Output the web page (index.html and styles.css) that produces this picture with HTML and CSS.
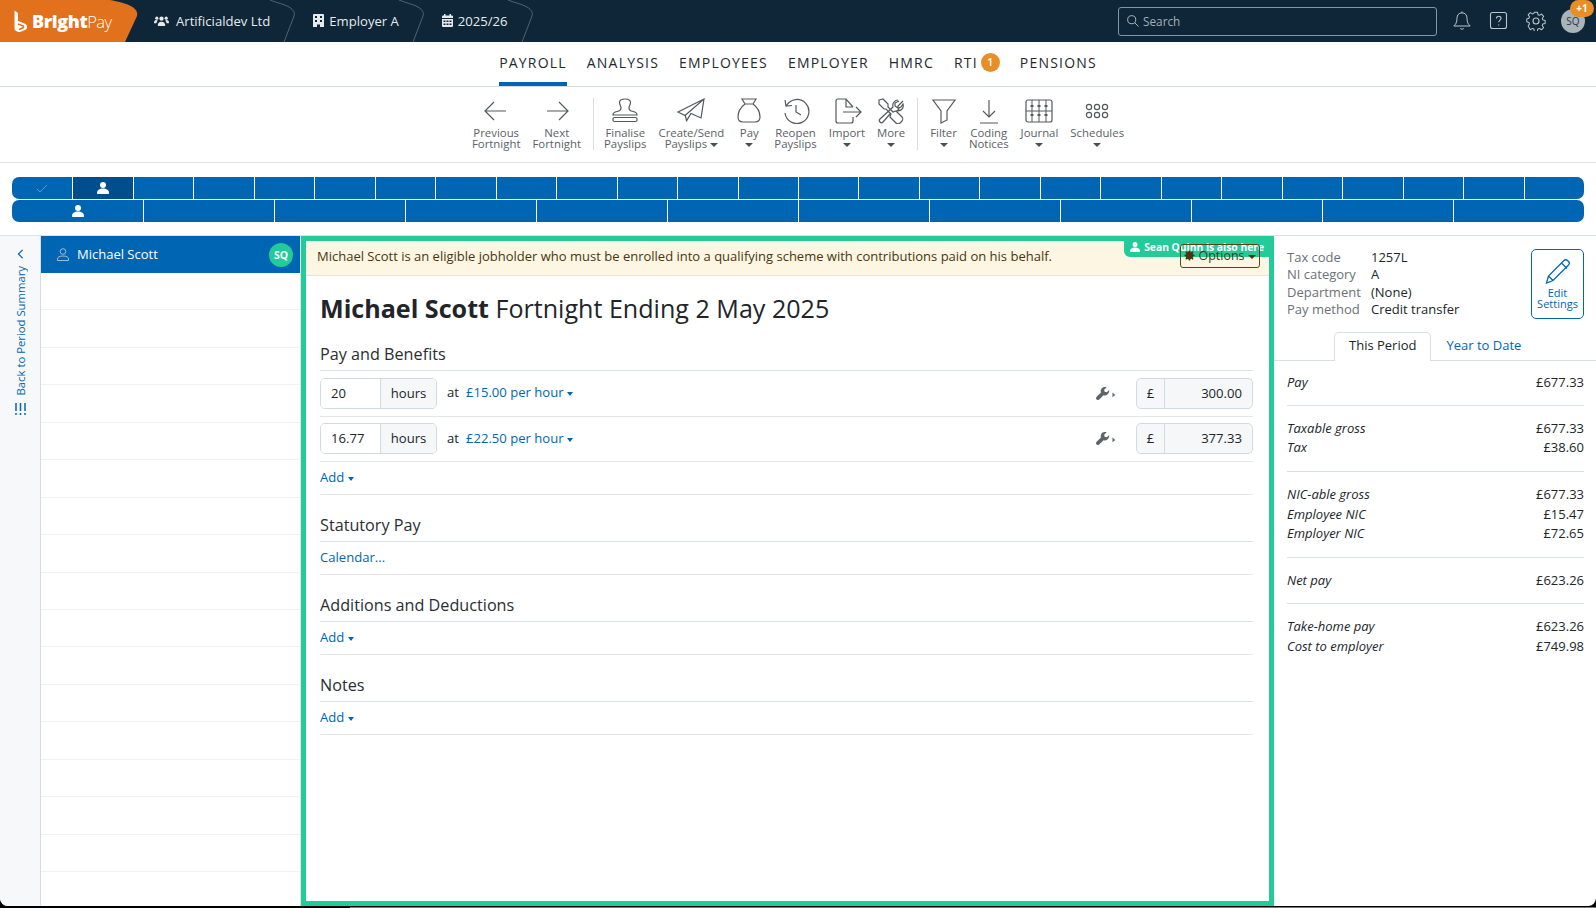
FILE: index.html
```html
<!DOCTYPE html>
<html lang="en">
<head>
    <meta charset="UTF-8">
    <meta name="viewport" content="width=device-width, initial-scale=1.0">
    <title>BrightPay - Payroll</title>
    <link rel="stylesheet" href="styles.css">
</head>
<body>
    <header class="topbar">
        <div class="logo">
            <svg class="logo-mark" viewBox="0 0 14 22"><path d="M.5.5L4 3v8l6.500 2.500c2 .8 2.500 2 2.500 3.500s-.7 2.500-2 3l-5 2c-1 .3-2 0-3-.5l-1.500-1c-.7-.5-1-1-1-2z" fill="#fff"/><path d="M4 14l5.500 2v1.500L5 19.500" fill="none" stroke="#e2711d" stroke-width="1.400"/></svg>
            <span class="logo-bright">Bright</span><span class="logo-pay">Pay</span>
        </div>
        <div class="crumb crumb-first">
            <svg class="crumb-icon crumb-icon-wide" viewBox="0 0 16 12"><circle cx="3" cy="3" r="1.700"/><circle cx="13" cy="3" r="1.700"/><circle cx="8" cy="3.500" r="2.300"/><path d="M0 8c0-2 1-3 2.500-3 .8 0 1.200.3 1.500.6C3 6.400 2.700 7.500 2.700 8.500H.8C.3 8.500 0 8.300 0 8zM16 8c0-2-1-3-2.500-3-.8 0-1.200.3-1.500.6 1 .8 1.300 1.900 1.300 2.900h1.900c.5 0 .8-.2.800-.5zM4 10.500C4 8.500 5.500 6.800 8 6.800s4 1.700 4 3.700c0 .5-.3.800-.8.800H4.800c-.5 0-.8-.3-.8-.8z"/></svg>
            <span>Artificialdev Ltd</span>
            <svg class="crumb-chevron" viewBox="0 0 28 42"><path d="M1 0C8 3 15 4 20 7c5 3 6 6 5 9L15 42"/></svg>
        </div>
        <div class="crumb">
            <svg class="crumb-icon" viewBox="0 0 11 13"><path fill-rule="evenodd" d="M1 0h9a1 1 0 0 1 1 1v12H7v-2.500H4V13H0V1a1 1 0 0 1 1-1zm1 2v2h2V2zm5 0v2h2V2zM2 6v2h2V6zm5 0v2h2V6z"/></svg>
            <span>Employer A</span>
            <svg class="crumb-chevron" viewBox="0 0 28 42"><path d="M1 0C8 3 15 4 20 7c5 3 6 6 5 9L15 42"/></svg>
        </div>
        <div class="crumb">
            <svg class="crumb-icon" viewBox="0 0 11 13"><path fill-rule="evenodd" d="M2 0h1.500v1.500h4V0H9v1.500h1a1 1 0 0 1 1 1V4H0V2.500a1 1 0 0 1 1-1h1zM0 5h11v7a1 1 0 0 1-1 1H1a1 1 0 0 1-1-1zm1.500 1.500V8h2V6.500zm3 0V8h2V6.500zm3 0V8h2V6.500zm-6 3V11h2V9.500zm3 0V11h2V9.500zm3 0V11h2V9.500z"/></svg>
            <span>2025/26</span>
            <svg class="crumb-chevron" viewBox="0 0 28 42"><path d="M1 0C8 3 15 4 20 7c5 3 6 6 5 9L15 42"/></svg>
        </div>
        <div class="topbar-right">
            <div class="search">
                <svg class="search-icon" viewBox="0 0 14 14"><circle cx="5.500" cy="5.500" r="4.700"/><path d="M9 9l4.500 4.500"/></svg>
                <span>Search</span>
            </div>
            <svg class="top-icon" viewBox="0 0 20 22"><path d="M10 2c-3.500 0-5.500 2.500-5.500 6 0 5-1.500 6.500-3.500 8.500h18c-2-2-3.500-3.500-3.500-8.500 0-3.500-2-6-5.500-6zM10 .5V2M8 19c.5 1.300 3.500 1.300 4 0"/></svg>
            <svg class="top-icon" viewBox="0 0 20 20"><rect x="1.500" y="1.500" width="16" height="16" rx="2"/><path d="M7.500 7.500c0-3 4.500-3 4.500-.2 0 2-2.300 2-2.300 4M9.700 13.500v1"/></svg>
            <svg class="top-icon" viewBox="0 0 20 20"><path d="M8.300 1h3.400l.5 2.700 1.500.7 2.400-1.400 2.300 2.500-1.500 2.300.5 1.500 2.600.7v3.200l-2.600.7-.6 1.500 1.500 2.300-2.400 2.400-2.300-1.500-1.500.6-.5 2.700H8.300l-.6-2.700-1.500-.6-2.300 1.500L1.500 16l1.500-2.300-.6-1.500L0 11.500V8.300l2.400-.7.6-1.500L1.500 3.800l2.400-2.400 2.300 1.500 1.500-.6z" transform="scale(.92) translate(.8 .3)" stroke-linejoin="round"/><circle cx="10" cy="10" r="3"/></svg>
            <div class="avatar">SQ<span class="avatar-badge">+1</span></div>
        </div>
    </header>

    <nav class="mainnav">
        <a class="nav-link active">PAYROLL</a>
        <a class="nav-link">ANALYSIS</a>
        <a class="nav-link">EMPLOYEES</a>
        <a class="nav-link">EMPLOYER</a>
        <a class="nav-link">HMRC</a>
        <a class="nav-link">RTI <span class="nav-badge">1</span></a>
        <a class="nav-link">PENSIONS</a>
    </nav>

    <div class="toolbar">
        <div class="tool">
            <svg class="tool-icon" viewBox="0 0 30 26"><path d="M25 13H5M13 4l-9 9 9 9"/></svg>
            <span>Previous<br>Fortnight</span>
        </div>
        <div class="tool">
            <svg class="tool-icon" viewBox="0 0 30 26"><path d="M5 13h20M17 4l9 9-9 9"/></svg>
            <span>Next<br>Fortnight</span>
        </div>
        <div class="tool-sep tool-sep-first"></div>
        <div class="tool">
            <svg class="tool-icon" viewBox="0 0 30 26"><path d="M11 10c0-2-1.500-3-1.500-5.500C9.500 2 12 1 15 1s5.500 1 5.500 3.500C20.500 7 19 8 19 10c0 2 1 3 4 3.500 3 .5 4 1.500 4 3.500H3c0-2 1-3 4-3.500 3-.5 4-1.500 4-3.500zM4.500 19.500h21c1 0 1.500.5 1.500 1.200v1.600c0 .7-.5 1.200-1.500 1.200h-21c-1 0-1.500-.5-1.500-1.200v-1.600c0-.7.5-1.200 1.500-1.200z"/></svg>
            <span>Finalise<br>Payslips</span>
        </div>
        <div class="tool">
            <svg class="tool-icon" viewBox="0 0 30 26"><path d="M28 1L2 14l7 3.500L28 1l-3 19-10-4.500-4.500 7-1.500-6M15 15.500L10.500 23"/></svg>
            <span>Create/Send<br>Payslips <i class="caret"></i></span>
        </div>
        <div class="tool">
            <svg class="tool-icon" viewBox="0 0 30 26"><path d="M8 1h14l-3 5h-8zM11 6h8c4 3 7 8 7 13 0 3-2 5-5 5H9c-3 0-5-2-5-5 0-5 3-10 7-13z"/></svg>
            <span>Pay<br><i class="caret"></i></span>
        </div>
        <div class="tool">
            <svg class="tool-icon" viewBox="0 0 30 26"><path d="M5.500 7.500A12 12 0 1 1 4 15M4 2l1 6 6-.5M15 7v7l5 3"/></svg>
            <span>Reopen<br>Payslips</span>
        </div>
        <div class="tool">
            <svg class="tool-icon" viewBox="0 0 30 26"><path d="M21 9L14 1H6C4.500 1 4 2 4 3v20c0 1 .5 2 2 2h13c1.500 0 2-1 2-2v-4M14 1v8h7M11 14h18M24 9l5 5-5 5"/></svg>
            <span>Import<br><i class="caret"></i></span>
        </div>
        <div class="tool">
            <svg class="tool-icon" viewBox="0 0 30 26"><path d="M3 2l4-1 5 5v3l5 5 3-1 6 6c1 1 1 3 0 4l-2 2c-1 1-3 1-4 0l-6-6 1-3-5-5H8L3 6zM27 3l-5 5v2l1 1-3 3M22 2c-3 0-6 3-5 7L4 21c-1 1-1 2 0 3s2 1 3 0L14 16M23 3l-4 2v3l3 2 3-1 2-3c1 3-1 7-5 7"/></svg>
            <span>More<br><i class="caret"></i></span>
        </div>
        <div class="tool-sep"></div>
        <div class="tool">
            <svg class="tool-icon" viewBox="0 0 30 26"><path d="M4 2h22L18 13v9l-6 3V13z"/></svg>
            <span>Filter<br><i class="caret"></i></span>
        </div>
        <div class="tool">
            <svg class="tool-icon" viewBox="0 0 30 26"><path d="M15 2v17M9 13l6 6 6-6M6 25h18"/></svg>
            <span>Coding<br>Notices</span>
        </div>
        <div class="tool">
            <svg class="tool-icon" viewBox="0 0 30 26"><rect x="2" y="2" width="26" height="22" rx="2"/><path d="M2 13h26M8 2v22M15 2v22M22 2v22" stroke-width="1"/><path d="M8 7v2M15 7v2M22 7v2M8 16v2M15 16v2M22 16v2" stroke-width="3"/></svg>
            <span>Journal<br><i class="caret"></i></span>
        </div>
        <div class="tool">
            <svg class="tool-icon" viewBox="0 0 30 26"><circle cx="7" cy="9" r="2.600"/><circle cx="15" cy="9" r="2.600"/><circle cx="23" cy="9" r="2.600"/><circle cx="7" cy="17" r="2.600"/><circle cx="15" cy="17" r="2.600"/><circle cx="23" cy="17" r="2.600"/></svg>
            <span>Schedules<br><i class="caret"></i></span>
        </div>
    </div>

    <div class="pagers">
        <div class="pager pager-weeks">
            <div class="pager-cell pager-done"><svg class="check" viewBox="0 0 12 9"><path d="M1 5l3 3 7-7"/></svg></div>
            <div class="pager-cell pager-current"><svg class="person" viewBox="0 0 12 12"><circle cx="6" cy="3" r="3"/><path d="M0 11c0-3 2.500-4.500 6-4.500s6 1.500 6 4.500c0 .6-.4 1-1 1H1c-.6 0-1-.4-1-1z"/></svg></div>
            <div class="pager-cell"></div><div class="pager-cell"></div><div class="pager-cell"></div><div class="pager-cell"></div>
            <div class="pager-cell"></div><div class="pager-cell"></div><div class="pager-cell"></div><div class="pager-cell"></div>
            <div class="pager-cell"></div><div class="pager-cell"></div><div class="pager-cell"></div><div class="pager-cell"></div>
            <div class="pager-cell"></div><div class="pager-cell"></div><div class="pager-cell"></div><div class="pager-cell"></div>
            <div class="pager-cell"></div><div class="pager-cell"></div><div class="pager-cell"></div><div class="pager-cell"></div>
            <div class="pager-cell"></div><div class="pager-cell"></div><div class="pager-cell"></div><div class="pager-cell"></div>
        </div>
        <div class="pager pager-months">
            <div class="pager-cell"><svg class="person" viewBox="0 0 12 12"><circle cx="6" cy="3" r="3"/><path d="M0 11c0-3 2.500-4.500 6-4.500s6 1.500 6 4.500c0 .6-.4 1-1 1H1c-.6 0-1-.4-1-1z"/></svg></div>
            <div class="pager-cell"></div><div class="pager-cell"></div><div class="pager-cell"></div><div class="pager-cell"></div>
            <div class="pager-cell"></div><div class="pager-cell"></div><div class="pager-cell"></div><div class="pager-cell"></div>
            <div class="pager-cell"></div><div class="pager-cell"></div><div class="pager-cell"></div>
        </div>
    </div>

    <main class="workspace">
        <aside class="backbar">
            <svg class="back-chevron" viewBox="0 0 8 12"><path d="M6.500 1L1.500 6l5 5"/></svg>
            <span class="back-label">Back to Period Summary</span>
            <svg class="back-list" viewBox="0 0 11 12"><path d="M1 0v8M1 10v2M5.500 0v8M5.500 10v2M10 0v8M10 10v2"/></svg>
        </aside>

        <section class="employees">
            <div class="employee employee-active">
                <svg class="employee-icon" viewBox="0 0 12 13"><circle cx="6" cy="3.500" r="2.800"/><path d="M.5 12.500V11c0-2 2-3 5.500-3s5.500 1 5.500 3v1.500z"/></svg>
                <span>Michael Scott</span>
                <span class="employee-tag">SQ</span>
            </div>
            <div class="employee"></div><div class="employee"></div><div class="employee"></div><div class="employee"></div>
            <div class="employee"></div><div class="employee"></div><div class="employee"></div><div class="employee"></div>
            <div class="employee"></div><div class="employee"></div><div class="employee"></div><div class="employee"></div>
            <div class="employee"></div><div class="employee"></div><div class="employee"></div><div class="employee"></div>
            <div class="employee"></div>
        </section>

        <section class="payslip">
            <div class="also-here">
                <svg class="also-icon" viewBox="0 0 12 12"><circle cx="6" cy="3" r="3"/><path d="M0 11c0-3 2.500-4.500 6-4.500s6 1.500 6 4.500c0 .6-.4 1-1 1H1c-.6 0-1-.4-1-1z"/></svg>
                Sean Quinn is also here
            </div>
            <div class="notice">
                <span>Michael Scott is an eligible jobholder who must be enrolled into a qualifying scheme with contributions paid on his behalf.</span>
                <button class="options-btn"><svg class="options-gear" viewBox="0 0 12 12"><circle cx="6" cy="6" r="3.200" fill="none" stroke="#4a3510" stroke-width="2.200"/><path d="M6 .5v11M.5 6h11M2 2l8 8M10 2l-8 8" stroke="#4a3510" stroke-width="1.600"/></svg> Options <i class="caret"></i></button>
            </div>
            <div class="payslip-body">
                <h1 class="payslip-title"><strong>Michael Scott</strong> Fortnight Ending 2 May 2025</h1>

                <h2 class="section-title section-first">Pay and Benefits</h2>
                <div class="pay-row">
                    <div class="input-group">
                        <span class="input-value">20</span>
                        <span class="input-unit">hours</span>
                    </div>
                    <span class="at">at</span>
                    <a class="link">£15.00 per hour <i class="caret"></i></a>
                    <svg class="wrench" viewBox="0 0 24 14"><path d="M14.500 3.200l-2.700 2.500-2.400-.5-.5-2.400L11.600.3C9.400-.4 7 .2 5.800 2c-.8 1.300-.9 2.700-.4 3.900L.7 10.600c-.9.900-.9 2.200 0 3 .8.800 2 .7 2.800-.1l4.700-4.700c1.300.5 2.700.4 3.900-.4 1.700-1.200 2.500-3.300 2.400-5.200z"/><path d="M18 6l3 2.500-3 2.500z"/></svg>
                    <div class="amount">
                        <span class="amount-sign">£</span>
                        <span class="amount-value">300.00</span>
                    </div>
                </div>
                <div class="pay-row">
                    <div class="input-group">
                        <span class="input-value">16.77</span>
                        <span class="input-unit">hours</span>
                    </div>
                    <span class="at">at</span>
                    <a class="link">£22.50 per hour <i class="caret"></i></a>
                    <svg class="wrench" viewBox="0 0 24 14"><path d="M14.500 3.200l-2.700 2.500-2.400-.5-.5-2.400L11.600.3C9.400-.4 7 .2 5.800 2c-.8 1.300-.9 2.700-.4 3.900L.7 10.600c-.9.900-.9 2.200 0 3 .8.800 2 .7 2.800-.1l4.700-4.700c1.300.5 2.700.4 3.900-.4 1.700-1.200 2.500-3.300 2.400-5.200z"/><path d="M18 6l3 2.500-3 2.500z"/></svg>
                    <div class="amount">
                        <span class="amount-sign">£</span>
                        <span class="amount-value">377.33</span>
                    </div>
                </div>
                <div class="link-row"><a class="link">Add <i class="caret"></i></a></div>

                <h2 class="section-title">Statutory Pay</h2>
                <div class="link-row"><a class="link">Calendar...</a></div>

                <h2 class="section-title">Additions and Deductions</h2>
                <div class="link-row"><a class="link">Add <i class="caret"></i></a></div>

                <h2 class="section-title">Notes</h2>
                <div class="link-row"><a class="link">Add <i class="caret"></i></a></div>
            </div>
        </section>

        <aside class="summary">
            <div class="summary-head">
                <dl class="facts">
                    <dt>Tax code</dt><dd>1257L</dd>
                    <dt>NI category</dt><dd>A</dd>
                    <dt>Department</dt><dd>(None)</dd>
                    <dt>Pay method</dt><dd>Credit transfer</dd>
                </dl>
                <div class="edit-btn">
                    <svg class="edit-icon" viewBox="0 0 26 26"><path d="M19 2.500c1-1 2.500-1 3.500 0l1 1c1 1 1 2.500 0 3.500L8 22.500 1.500 25l2-7zM16.500 5l5.500 5.500M3.500 18L8 22.500"/></svg>
                    <span>Edit<br>Settings</span>
                </div>
            </div>
            <div class="tabs">
                <a class="tab tab-active">This Period</a>
                <a class="tab">Year to Date</a>
            </div>
            <div class="stats">
                <div class="stat-group">
                    <div class="stat"><em>Pay</em><span>£677.33</span></div>
                </div>
                <div class="stat-group">
                    <div class="stat"><em>Taxable gross</em><span>£677.33</span></div>
                    <div class="stat"><em>Tax</em><span>£38.60</span></div>
                </div>
                <div class="stat-group">
                    <div class="stat"><em>NIC-able gross</em><span>£677.33</span></div>
                    <div class="stat"><em>Employee NIC</em><span>£15.47</span></div>
                    <div class="stat"><em>Employer NIC</em><span>£72.65</span></div>
                </div>
                <div class="stat-group stat-group-net">
                    <div class="stat"><em>Net pay</em><span>£623.26</span></div>
                </div>
                <div class="stat-group">
                    <div class="stat"><em>Take-home pay</em><span>£623.26</span></div>
                    <div class="stat"><em>Cost to employer</em><span>£749.98</span></div>
                </div>
            </div>
        </aside>
    </main>
    <div class="window-edge"></div>
</body>
</html>
```

FILE: styles.css
```css
* {
    margin: 0;
    padding: 0;
    box-sizing: border-box;
}

html, body {
    height: 908px;
    overflow: hidden;
}

body {
    font-family: "Open Sans", sans-serif;
    font-size: 14px;
    color: #212529;
    background: #000;
    display: flex;
    flex-direction: column;
}

a {
    cursor: pointer;
}

.caret {
    display: inline-block;
    width: 0;
    height: 0;
    border-left: 4px solid transparent;
    border-right: 4px solid transparent;
    border-top: 4px solid currentColor;
    vertical-align: 1px;
}

/* top bar */
.topbar {
    height: 42px;
    flex: none;
    background: #0f2638;
    color: #e6eaed;
    display: flex;
    align-items: center;
}

.logo {
    width: 138px;
    height: 42px;
    flex: none;
    background: #e2711d;
    clip-path: path("M0 0H110C126 3 139 7 137 16L125 42H0Z");
    display: flex;
    align-items: center;
    padding-left: 14px;
    font-size: 18px;
    color: #fff;
    letter-spacing: -0.4px;
}

.logo-mark {
    width: 14px;
    height: 22px;
    margin-right: 4px;
}

.logo-bright {
    font-weight: 800;
}

.logo-pay {
    font-weight: 300;
    font-size: 16.5px;
    letter-spacing: -0.6px;
}

.crumb {
    position: relative;
    height: 42px;
    display: flex;
    align-items: center;
    gap: 5px;
    padding: 0 13px 1px 30px;
    font-size: 13.1px;
    white-space: nowrap;
}

.crumb-first {
    padding-left: 16px;
    gap: 7px;
}

.crumb-icon {
    width: 11px;
    height: 13px;
    fill: #e6eaed;
}

.crumb-icon-wide {
    width: 15px;
    height: 12px;
}

.crumb-chevron {
    position: absolute;
    top: 0;
    right: -14px;
    width: 28px;
    height: 42px;
    fill: none;
    stroke: #52626f;
    stroke-width: 1;
}

.topbar-right {
    margin-left: auto;
    display: flex;
    align-items: center;
    padding-right: 11px;
}

.search {
    width: 319px;
    height: 29px;
    border: 1px solid #8296a3;
    border-radius: 3px;
    display: flex;
    align-items: center;
    gap: 4px;
    padding: 0 8px;
    font-size: 11.8px;
    color: #a3afb8;
    margin-right: 15px;
}

.search-icon {
    width: 12px;
    height: 12px;
    fill: none;
    stroke: #c6ced4;
    stroke-width: 1;
}

.top-icon {
    width: 20px;
    height: 20px;
    margin-right: 17px;
    fill: none;
    stroke: #bcc6cd;
    stroke-width: 1.1;
}

.avatar {
    position: relative;
    width: 24px;
    height: 24px;
    margin-left: -2px;
    border-radius: 50%;
    background: #a9b3ba;
    color: #2b3a46;
    font-size: 10px;
    text-align: center;
    line-height: 24px;
}

.avatar-badge {
    position: absolute;
    top: -9px;
    left: 9px;
    width: 24px;
    height: 17px;
    border-radius: 9px;
    background: #e88e26;
    color: #fff;
    font-size: 10px;
    font-weight: 700;
    line-height: 16px;
}

/* main navigation */
.mainnav {
    height: 45px;
    flex: none;
    display: flex;
    justify-content: center;
    gap: 20px;
    background: #fff;
    border-bottom: 1px solid #d5dce1;
}

.nav-link {
    height: 44px;
    display: flex;
    align-items: center;
    gap: 3px;
    padding-bottom: 4px;
    font-size: 14px;
    letter-spacing: 1.2px;
    color: #24292d;
}

.nav-link.active {
    border-bottom: 4px solid #0066b3;
    padding-bottom: 0;
}

.nav-badge {
    width: 19px;
    height: 19px;
    border-radius: 50%;
    background: #e88e26;
    color: #fff;
    font-size: 10.5px;
    font-weight: 600;
    letter-spacing: 0;
    text-align: center;
    line-height: 19px;
}

/* toolbar */
.toolbar {
    height: 76px;
    flex: none;
    display: flex;
    justify-content: center;
    align-items: flex-start;
    gap: 12px;
    padding-top: 11px;
    background: #fff;
    border-bottom: 1px solid #dfe3e6;
}

.tool {
    display: flex;
    flex-direction: column;
    align-items: center;
    min-width: 26px;
    font-size: 11.4px;
    line-height: 11px;
    color: #5b6166;
    text-align: center;
    white-space: nowrap;
}

.tool .caret {
    vertical-align: 1px;
    color: #4a4f54;
}

.tool-icon {
    width: 30px;
    height: 26px;
    margin: 0 -2px 3px;
    flex: none;
    fill: none;
    stroke: #55595d;
    stroke-width: 1.2;
}

.tool-sep {
    width: 1px;
    height: 52px;
    background: #d8dde1;
}

.tool-sep-first {
    margin-right: -2px;
}

/* fortnight and month pagers */
.pagers {
    flex: none;
    display: flex;
    flex-direction: column;
    gap: 1px;
    padding: 14px 12px 13px;
    height: 73px;
    background: #fff;
    border-bottom: 1px solid #dde2e6;
}

.pager {
    display: grid;
    height: 22px;
    flex: none;
    border-radius: 7px;
    overflow: hidden;
    background: #0066b3;
}

.pager-weeks {
    grid-template-columns: repeat(26, 1fr);
}

.pager-months {
    grid-template-columns: repeat(12, 1fr);
}

.pager-cell {
    display: flex;
    align-items: center;
    justify-content: center;
    border-left: 1px solid #fff;
}

.pager-cell:first-child {
    border-left: none;
}

.pager-current {
    background: #004f8c;
}

.check {
    width: 12px;
    height: 9px;
    fill: none;
    stroke: #6ea5d1;
    stroke-width: 0.8;
}

.person {
    width: 12px;
    height: 12px;
    fill: #fff;
}

/* workspace */
.workspace {
    flex: 1;
    display: flex;
    min-height: 0;
    background: #fff;
    border-radius: 0 0 8px 8px;
    overflow: hidden;
}

.backbar {
    width: 41px;
    flex: none;
    background: #f6f8fa;
    border-right: 1px solid #d7dce0;
    display: flex;
    flex-direction: column;
    align-items: center;
    padding-top: 13px;
    color: #0066b3;
}

.back-chevron {
    width: 7px;
    height: 10px;
    fill: none;
    stroke: #0066b3;
    stroke-width: 1.5;
}

.back-label {
    writing-mode: vertical-rl;
    transform: rotate(180deg);
    font-size: 11.3px;
    margin-top: 7px;
    white-space: nowrap;
}

.back-list {
    width: 11px;
    height: 12px;
    margin-top: 8px;
    fill: none;
    stroke: #0066b3;
    stroke-width: 1.5;
}

.employees {
    width: 260px;
    flex: none;
    overflow: hidden;
    border-right: 1px solid #e3e6e9;
}

.employee {
    height: 37.45px;
    display: flex;
    align-items: center;
    border-bottom: 1px solid #f0f1f3;
}

.employee-active {
    height: 37px;
    background: #0066b3;
    color: #fff;
    font-size: 13px;
    padding: 0 7px 2px 16px;
    border-bottom: none;
}

.employee-icon {
    width: 12px;
    height: 13px;
    margin: 2px 8px 0 0;
    fill: none;
    stroke: #b9d4ea;
    stroke-width: 0.8;
}

.employee-tag {
    margin-left: auto;
    margin-top: 2px;
    width: 24px;
    height: 24px;
    border-radius: 50%;
    background: #23cb9b;
    color: #fff;
    font-size: 10.5px;
    font-weight: 700;
    text-align: center;
    line-height: 24px;
}

/* payslip */
.payslip {
    position: relative;
    width: 973px;
    flex: none;
    border: 5px solid #23cb9b;
    display: flex;
    flex-direction: column;
}

.also-here {
    position: absolute;
    top: -5px;
    right: 0;
    height: 21px;
    padding: 0 5px 0 6px;
    display: flex;
    align-items: center;
    gap: 4px;
    background: #23cb9b;
    border-bottom-left-radius: 6px;
    color: #fff;
    font-size: 10.3px;
    font-weight: 700;
    white-space: nowrap;
}

.also-icon {
    width: 10px;
    height: 10px;
    fill: #fff;
}

.notice {
    height: 35px;
    flex: none;
    display: flex;
    align-items: center;
    padding: 0 9px 5px 11px;
    background: #fdf6e3;
    border-bottom: 1px solid #e8e3d2;
    font-size: 13px;
    color: #4a3510;
    white-space: nowrap;
}

.options-btn {
    position: relative;
    z-index: 1;
    margin-left: auto;
    width: 80px;
    height: 24px;
    border: 1px solid #5c4413;
    border-radius: 3px;
    background: transparent;
    color: #4a3510;
    font-family: "Open Sans", sans-serif;
    font-size: 12.5px;
    white-space: nowrap;
}

.options-gear {
    width: 11px;
    height: 11px;
    vertical-align: -1px;
}

.payslip-body {
    padding: 0 16px 0 14px;
    flex: 1;
}

.payslip-title {
    font-size: 25.1px;
    font-weight: 400;
    line-height: 36px;
    padding-top: 14px;
    height: 61px;
    color: #212529;
}

.payslip-title strong {
    font-weight: 700;
}

.section-title {
    font-size: 16.2px;
    font-weight: 400;
    line-height: 22px;
    height: 33px;
    padding-top: 5px;
    margin-top: 14px;
    border-bottom: 1px solid #d9dfe3;
    color: #2a2e32;
}

.section-first {
    margin-top: 0;
    height: 34px;
    padding-top: 6px;
}

.pay-row {
    height: 45.5px;
    display: flex;
    align-items: center;
    border-bottom: 1px solid #e4e7ea;
    font-size: 13.1px;
}

.input-group {
    display: flex;
    width: 117px;
    height: 31px;
    border: 1px solid #d2dae0;
    border-radius: 5px;
    overflow: hidden;
}

.input-value {
    width: 60px;
    padding-left: 10px;
    line-height: 28px;
    background: #fff;
    border-right: 1px solid #d2dae0;
}

.input-unit {
    flex: 1;
    background: #f5f7f9;
    text-align: center;
    line-height: 28px;
}

.at {
    margin: 0 7px 2px 10px;
}

.pay-row .link {
    margin-bottom: 2px;
}

.link {
    color: #0066b3;
}

.link .caret {
    border-left-width: 3.5px;
    border-right-width: 3.5px;
}

.wrench {
    width: 22px;
    height: 13px;
    margin-left: auto;
    margin-right: 18px;
    fill: #5f6468;
}

.amount {
    display: flex;
    width: 117px;
    height: 31px;
    border: 1px solid #d2dae0;
    border-radius: 5px;
    overflow: hidden;
    background: #f5f7f9;
    line-height: 28px;
}

.amount-sign {
    width: 28px;
    text-align: center;
    border-right: 1px solid #d2dae0;
}

.amount-value {
    flex: 1;
    text-align: right;
    padding-right: 10px;
}

.link-row {
    height: 33px;
    display: flex;
    align-items: center;
    padding-bottom: 3px;
    font-size: 13.1px;
    border-bottom: 1px solid #e4e7ea;
}

/* summary column */
.summary {
    flex: 1;
    min-width: 0;
}

.summary-head {
    height: 96px;
    padding: 9px 12px 0 13px;
    display: flex;
    justify-content: space-between;
}

.facts {
    display: grid;
    grid-template-columns: 84px auto;
    grid-auto-rows: 17.3px;
    margin-top: 4px;
    font-size: 13px;
    line-height: 17.3px;
}

.facts dt {
    color: #6c7176;
}

.edit-btn {
    width: 53px;
    height: 70px;
    margin-top: 4px;
    border: 1px solid #0066b3;
    border-radius: 5px;
    color: #0066b3;
    font-size: 11px;
    line-height: 11px;
    text-align: center;
    display: flex;
    flex-direction: column;
    align-items: center;
    padding-top: 8px;
}

.edit-icon {
    width: 26px;
    height: 26px;
    margin-bottom: 3px;
    fill: none;
    stroke: #0066b3;
    stroke-width: 1.3;
}

.tabs {
    display: flex;
    height: 29px;
    padding-left: 60px;
    border-bottom: 1px solid #d9dfe3;
    font-size: 13px;
}

.tab {
    height: 29px;
    padding: 0 14px;
    line-height: 25px;
    color: #0066b3;
    border: 1px solid transparent;
    border-bottom: none;
}

.tab-active {
    background: #fff;
    color: #212529;
    border-color: #d9dfe3;
    border-radius: 5px 5px 0 0;
}

.stats {
    padding: 0 12px 0 13px;
    font-size: 13px;
}

.stat-group {
    padding: 13px 0;
    border-bottom: 1px solid #d9dfe3;
}

.stat-group:first-child {
    padding: 12px 0;
}

.stat-group-net {
    padding-bottom: 12px;
}

.stat-group:last-child {
    border-bottom: none;
}

.stat {
    display: flex;
    justify-content: space-between;
    height: 19.7px;
    line-height: 19.7px;
}

.stat em {
    font-style: italic;
}

/* last pixels of the capture */
.window-edge {
    height: 2px;
    flex: none;
    background: linear-gradient(to right, #000 350px, #777 350px) bottom / 100% 1px no-repeat, #000;
}
```
